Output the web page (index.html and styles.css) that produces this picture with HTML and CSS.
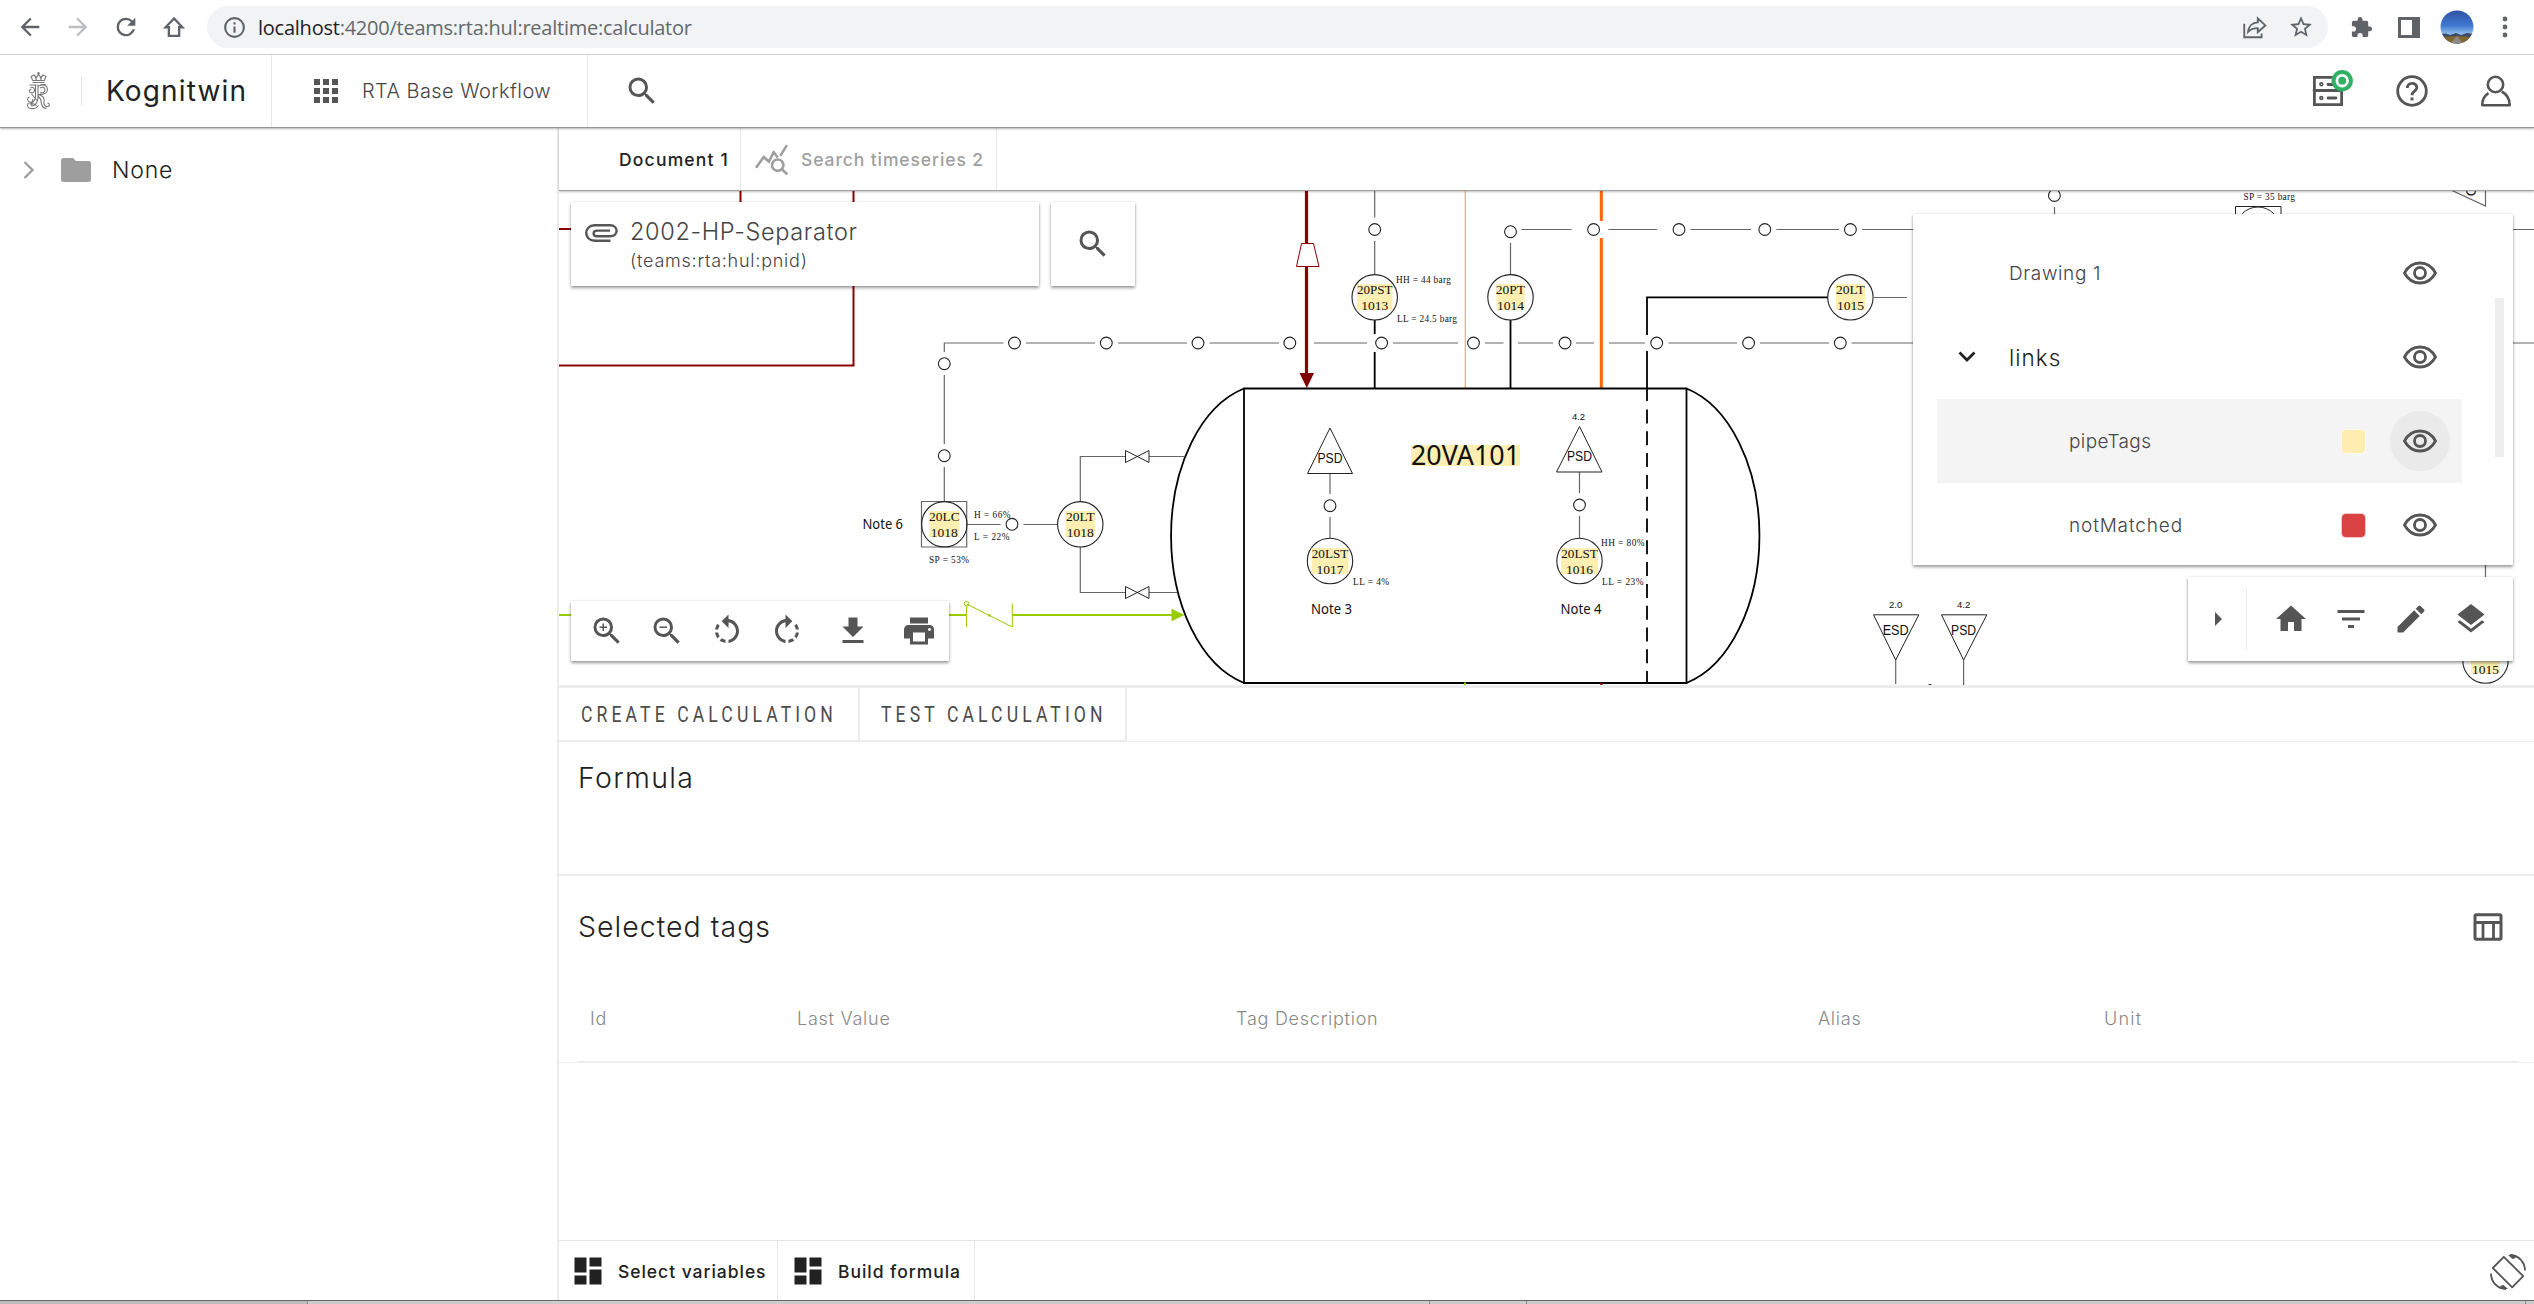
FILE: index.html
```html
<!DOCTYPE html>
<html lang="en">
<head>
<meta charset="utf-8">
<title>Kognitwin</title>
<link rel="stylesheet" href="styles.css">
</head>
<body>
<svg class="defs" width="0" height="0">
  <defs>
    <symbol id="eye" viewBox="0 0 36 36"><path d="M2.500 18C6 11.500 11.500 8 18 8s12 3.500 15.500 10C30 24.500 24.500 28 18 28S6 24.500 2.500 18z" fill="none" stroke="#555" stroke-width="2.800"/><circle cx="18" cy="18" r="5.500" fill="none" stroke="#555" stroke-width="2.800"/></symbol>
    <symbol id="search" viewBox="0 0 24 24"><path d="M15.500 14h-.79l-.28-.27A6.471 6.471 0 0 0 16 9.500 6.500 6.500 0 1 0 9.500 16c1.610 0 3.090-.59 4.230-1.570l.27.28v.79l5 4.990L20.490 19l-4.990-5zm-6 0C7.010 14 5 11.990 5 9.500S7.010 5 9.500 5 14 7.010 14 9.500 11.990 14 9.500 14z"/></symbol>
    <symbol id="dash" viewBox="0 0 24 24"><path d="M3 13h8V3H3v10zm0 8h8v-6H3v6zm10 0h8V11h-8v10zm0-18v6h8V3h-8z"/></symbol>
  </defs>
</svg>

<div class="browser-bar">
  <svg class="nav-icon" viewBox="0 0 24 24"><path d="M20 11H7.830l5.590-5.590L12 4l-8 8 8 8 1.410-1.410L7.830 13H20v-2z"/></svg>
  <svg class="nav-icon disabled" viewBox="0 0 24 24"><path d="M12 4l-1.410 1.410L16.170 11H4v2h12.170l-5.580 5.590L12 20l8-8z"/></svg>
  <svg class="nav-icon" viewBox="0 0 24 24"><path d="M17.650 6.350A7.958 7.958 0 0 0 12 4a8 8 0 1 0 7.730 10h-2.080A6 6 0 1 1 12 6c1.660 0 3.140.69 4.220 1.780L13 11h7V4l-2.350 2.350z"/></svg>
  <svg class="nav-icon" viewBox="0 0 24 24"><path d="M12 4.700L4.800 12.200H7.600V19.600H16.400V12.200H19.200z" fill="none" stroke="#5f6368" stroke-width="2"/></svg>
  <div class="omnibox">
    <svg class="info" viewBox="0 0 24 24"><path d="M11 7h2v2h-2zm0 4h2v6h-2zm1-9a10 10 0 1 0 0 20 10 10 0 0 0 0-20zm0 18a8 8 0 1 1 0-16 8 8 0 0 1 0 16z"/></svg>
    <span class="url"><b>localhost</b>:4200/teams:rta:hul:realtime:calculator</span>
    <svg class="share" viewBox="0 0 24 24"><path d="M3 9v12.500h16V18M6.500 16.500c.5-5 4-8.500 9-8.700V4l7 6.500-7 6.300V13c-4 0-6.500.8-9 3.500z" fill="none" stroke="#5f6368" stroke-width="1.700"/></svg>
    <svg class="star" viewBox="0 0 24 24"><path d="M22 9.240l-7.190-.62L12 2 9.190 8.630 2 9.240l5.460 4.730L5.820 21 12 17.270 18.180 21l-1.630-7.030L22 9.240zM12 15.400l-3.760 2.270 1-4.280-3.320-2.880 4.380-.38L12 6.100l1.710 4.040 4.380.38-3.320 2.880 1 4.280L12 15.400z"/></svg>
  </div>
  <svg class="ext" viewBox="0 0 24 24"><path d="M20.500 11H19V7a2 2 0 0 0-2-2h-4V3.500a2.500 2.500 0 0 0-5 0V5H4a2 2 0 0 0-2 2v3.800h1.500a2.700 2.700 0 0 1 0 5.400H2V20a2 2 0 0 0 2 2h3.800v-1.500a2.700 2.700 0 0 1 5.400 0V22H17a2 2 0 0 0 2-2v-4h1.500a2.500 2.500 0 0 0 0-5z"/></svg>
  <svg class="side" viewBox="0 0 22 21"><path d="M0 0h22v21H0zM3 3v15h11V3z" fill-rule="evenodd"/></svg>
  <svg class="avatar" viewBox="0 0 34 34">
    <defs><linearGradient id="sky" x1="0" y1="0" x2="0" y2="1"><stop offset="0" stop-color="#2f519f"/><stop offset=".45" stop-color="#3f78d0"/><stop offset=".7" stop-color="#8dbbe9"/></linearGradient><clipPath id="round"><circle cx="17" cy="17" r="16.500"/></clipPath></defs>
    <g clip-path="url(#round)"><path d="M0 0h34v34H0z" fill="url(#sky)"/><path d="M0 24l6-.5 4 1.500 6-2 5 2 6-2 7 1v10H0z" fill="#3d4a66"/><path d="M0 27l17-1 17 1v8H0z" fill="#80662f"/><path d="M17 26l-7 8h13z" fill="#8c8a86"/></g>
  </svg>
  <svg class="dots" viewBox="0 0 6 22"><circle cx="3" cy="3" r="2.400"/><circle cx="3" cy="11" r="2.400"/><circle cx="3" cy="19" r="2.400"/></svg>
</div>

<header class="app-header">
  <div class="brand">
    <svg class="crest" viewBox="0 0 24 38" fill="none" stroke="#777" stroke-width="1.100">
      <path d="M6 10.500h12M6.500 9l-2-4.500 3-1.500 2.500 2.500L12 2l2 3.500L16.500 3l3 1.500-2 4.500M12 0v3M10.500 1.200h3M9 5l1 4M15 5l-1 4M6 8.500h12"/>
      <path d="M3 13h7M14 12.500h5M9 12.500v12c0 4-3 7-6 7M11.500 12.500v13c0 5-3 8.500-7 8.500M4 15.500c3-1 4 1 4 3s-2 3-4 2-1-4 1-3M12 14c6-2.500 9 0 9 3.500s-4 5.500-9 5M13.500 16c3-1.500 5-.5 5 2s-2.500 3-5 2.800M13 23c4 1 5 4 4.500 7s1.500 5 4 4.500 1-4-.5-3M11 24c4 2 3.500 6 4 8s2 4.500 5 4.500M3 25c-3 1-2 4 0 5s4-1 3-3M2 31c-2 2-1 5 2 5.500s6 0 8-3M5 22l6 7M4 33c2-2 5-1 6 1"/>
    </svg>
    <i class="brand-rule"></i>
    <span class="brand-name">Kognitwin</span>
  </div>
  <div class="workflow">
    <svg class="grid-icon" viewBox="0 0 24 24"><path d="M0 0h6v6H0zM9 0h6v6H9zM18 0h6v6h-6zM0 9h6v6H0zM9 9h6v6H9zM18 9h6v6h-6zM0 18h6v6H0zM9 18h6v6H9zM18 18h6v6h-6z"/></svg>
    <span class="wf-name">RTA Base Workflow</span>
  </div>
  <svg class="header-search"><use href="#search"/></svg>
  <div class="header-tools">
    <svg class="server" viewBox="0 0 42 38" fill="none" stroke="#555" stroke-width="2.800" stroke-linecap="round"><path d="M2.400 8.400h27.200v27.200H2.400zM2 21.500h27M16 15.500h6M16 29h8"/><circle cx="9.300" cy="15.300" r=".8"/><circle cx="9.300" cy="29" r=".8"/><circle cx="30.200" cy="11.700" r="10.700" fill="#2fb064" stroke="none"/><circle cx="30.200" cy="11.700" r="5.300" stroke="#fff"/></svg>
    <svg class="help" viewBox="0 0 32 32" fill="none" stroke="#555" stroke-width="2.800"><circle cx="16" cy="16" r="14.300"/><path d="M11.300 13c0-6 9.500-6 9.500-.4 0 3.600-4.800 3.500-4.800 7.700"/><path d="M16 22.500v2.900" stroke-width="3"/></svg>
    <svg class="person" viewBox="0 0 32 32" fill="none" stroke="#555" stroke-width="2.600" stroke-linejoin="round"><circle cx="15.500" cy="9.500" r="7.700"/><path d="M8.500 18.200C4.500 20.500 2.300 25 2.300 30.200h27.400c0-6-3-11-8-13.700"/></svg>
  </div>
</header>

<div class="workspace">
  <aside class="tree">
    <div class="tree-row">
      <svg class="chev" viewBox="0 0 12 18"><path d="M1.500 1l8 8-8 8" fill="none" stroke="#9e9e9e" stroke-width="2.300"/></svg>
      <svg class="folder" viewBox="0 0 30 24"><path d="M2.500 0h9.500l3 3h12.500A2.500 2.500 0 0 1 30 5.500v16a2.500 2.500 0 0 1-2.500 2.500h-25A2.500 2.500 0 0 1 0 21.500v-19A2.500 2.500 0 0 1 2.500 0z"/></svg>
      <span class="tree-label">None</span>
    </div>
  </aside>

  <main class="content">
    <nav class="doc-tabs">
      <div class="doc-tab first"><span class="t-doc">Document 1</span></div>
      <div class="doc-tab second">
        <svg class="series" viewBox="0 0 32 30" fill="none" stroke="#9e9e9e" stroke-width="2.500"><path d="M1 23l7.500-10.500 5 4.500 5-10M17.500 7l4.500 6M31 1l-6.500 10.500"/><circle cx="22" cy="20.500" r="5.500"/><path d="M26 24.500l5.500 5"/></svg>
        <span class="t-search">Search timeseries 2</span>
      </div>
    </nav>

    <section class="viewer">
      <svg class="diagram" viewBox="559 191 1975 494">
        <g fill="none" stroke="#8b0000" stroke-width="2">
          <path d="M740.500 191V229M559 229H740M853.500 191V365.500H559"/>
          <path d="M1306.500 191V244M1306.500 266V375" stroke-width="3.200"/>
          <path d="M1301.500 243.500h12l5.500 23h-22.500z" stroke-width="1"/>
        </g>
        <path d="M1299.500 373h14.500l-7.200 15z" fill="#800000"/>
        <path d="M1465.300 191V388" stroke="#ffb27a" stroke-width="1.400"/>
        <path d="M1601.300 191V221M1601.300 238V388" stroke="#ff6600" stroke-width="3"/>
        <g fill="none" stroke="#666" stroke-width="1.200">
          <path d="M1374.700 191V217.500M1374.700 241V274M1510.500 243V274"/>
          <path d="M1521.500 229.500H1571.500M1608.500 229.500H1657M1690.500 229.500H1751M1776.500 229.500H1839M1862 229.500H2534"/>
          <path d="M944.300 352V343H1003.500M1026 343H1095M1118 343H1187M1209.500 343H1279M1314 343H1367M1393 343H1458M1485 343H1503.500M1518 343H1553M1576 343H1594M1609 343H1645M1668.500 343H1737M1760 343H1829M1851.500 343H2534"/>
          <path d="M944.300 375V444M944.300 467V501M921.500 501.500h45.200v45.500h-45.200zM967 524.500H1000.500M1023.500 524.500H1057.500"/>
          <path d="M1080.300 501.500V456.500H1125.500M1149 456.500H1184M1080.300 547V592.500H1125.500M1149 592.500H1177"/>
          <path d="M1125.500 450.500V462.500L1149 450.500V462.500zM1125.500 586.500V598.500L1149 586.500V598.500z" stroke="#222" stroke-width="1"/>
          <path d="M1330 473.500V494M1330 517V538M1579.500 472V493M1579.500 516V538M1874 297.500H1907M2054.500 207V214M2485.500 565V577M1895.700 660V684M1963.600 660V685M2485.500 191V206L2451 190"/>
        </g>
        <g fill="none" stroke="#222" stroke-width="1">
          <path d="M1330 428L1352.500 473.500H1307.500zM1579.500 426.500L1602 472H1556.500zM1873.500 614.800H1918.800L1895.700 660zM1941.500 614.800H1986.800L1963.600 660z"/>
          <path d="M2235.500 230V206.500H2281V230"/><circle cx="2258" cy="229" r="22"/>
          <circle cx="1930" cy="687" r="2.500"/>
        </g>
        <g fill="#fff" stroke="#222" stroke-width="1.100">
          <circle cx="1374.700" cy="229.500" r="5.900"/><circle cx="1510.500" cy="231.700" r="5.900"/><circle cx="1593.600" cy="229.500" r="5.900"/><circle cx="1679" cy="229.500" r="5.900"/><circle cx="1764.800" cy="229.500" r="5.900"/><circle cx="1850.400" cy="229.500" r="5.900"/><circle cx="2054.400" cy="195.500" r="5.900"/>
          <circle cx="1014.500" cy="343" r="5.900"/><circle cx="1106.300" cy="343" r="5.900"/><circle cx="1198" cy="343" r="5.900"/><circle cx="1289.800" cy="343" r="5.900"/><circle cx="1473.500" cy="343" r="5.900"/><circle cx="1565" cy="343" r="5.900"/><circle cx="1748.600" cy="343" r="5.900"/><circle cx="1840.300" cy="343" r="5.900"/>
          <circle cx="944.300" cy="363.700" r="5.900"/><circle cx="944.300" cy="455.700" r="5.900"/><circle cx="1012" cy="524.300" r="5.900"/><circle cx="1330" cy="505.700" r="5.900"/><circle cx="1579.500" cy="505" r="5.900"/>
        </g>
        <g fill="none" stroke="#000" stroke-width="1.800">
          <path d="M1374.700 320V334M1374.700 352V388M1510.500 320V388M1647 335V297.300H1828M1647 351V388"/>
          <path d="M1244 388.500H1686.500V683H1244zM1244 388.500A97 152 0 0 0 1244 683M1686.500 388.500A97 152 0 0 1 1686.500 683"/>
          <path d="M1647 388.500V401M1647 409.500V683" stroke-dasharray="14 7.800"/>
        </g>
        <g fill="#fff" stroke="#222" stroke-width="1.100"><circle cx="1381.600" cy="343" r="5.900"/><circle cx="1656.700" cy="343" r="5.900"/></g>
        <g fill="none" stroke="#99cc00" stroke-width="2.200">
          <path d="M559 615H966.500M1012 615H1172"/>
          <path d="M966.500 606V627M966.500 604L1012.300 627V603.500" stroke-width="1"/><circle cx="966.500" cy="603.700" r="2.300" stroke-width="1"/><path d="M1465 682.500V685"/><path d="M1601.300 682.500V685" stroke="#800000"/>
        </g>
        <circle cx="989.300" cy="615.300" r="1.300" fill="#99cc00"/>
        <path d="M1171.500 608.700L1184.500 615 1171.500 621.300z" fill="#99cc00"/>

        <g fill="none" stroke="#222" stroke-width="1.100"><circle cx="1374.700" cy="297.300" r="22.700"/><circle cx="1510.500" cy="297.300" r="22.700"/><circle cx="1850.400" cy="297.300" r="22.700"/><circle cx="944.300" cy="524.300" r="22.700"/><circle cx="1080.300" cy="524.300" r="22.700"/><circle cx="1330" cy="561" r="22.700"/><circle cx="1579.500" cy="561" r="22.700"/><circle cx="2485.500" cy="660.600" r="22.700"/></g>
        <g fill="#fdeeb2">
          <rect x="1357" y="284" width="35.500" height="26"/><rect x="1496.500" y="284" width="28" height="26"/><rect x="1836" y="284" width="29" height="26"/><rect x="929.500" y="511" width="29.500" height="26"/><rect x="1065.500" y="511" width="29.500" height="26"/><rect x="1311.500" y="548" width="37" height="26"/><rect x="1561" y="548" width="37" height="26"/><rect x="2471" y="647.500" width="29" height="26"/><rect x="1411" y="445" width="109" height="21"/>
        </g>
        <g class="tag">
          <text x="1374.700" y="294" textLength="35.500" lengthAdjust="spacingAndGlyphs">20PST</text><text x="1374.700" y="310">1013</text>
          <text x="1510.500" y="294">20PT</text><text x="1510.500" y="310">1014</text>
          <text x="1850.400" y="294">20LT</text><text x="1850.400" y="310">1015</text>
          <text x="944.300" y="521">20LC</text><text x="944.300" y="537">1018</text>
          <text x="1080.300" y="521">20LT</text><text x="1080.300" y="537">1018</text>
          <text x="1330" y="558" textLength="36.500" lengthAdjust="spacingAndGlyphs">20LST</text><text x="1330" y="574">1017</text>
          <text x="1579.500" y="558" textLength="36.500" lengthAdjust="spacingAndGlyphs">20LST</text><text x="1579.500" y="574">1016</text>
          <text x="2485.500" y="673.500">1015</text>
        </g>
        <g class="limit">
          <text x="1396" y="282.500" textLength="55">HH = 44 barg</text><text x="1397" y="321.500" textLength="60">LL = 24.5 barg</text>
          <text x="974" y="517.700" textLength="36.500">H = 66%</text><text x="974" y="540" textLength="35.500">L = 22%</text><text x="929" y="563" textLength="40">SP = 53%</text>
          <text x="1353" y="585" textLength="36">LL = 4%</text><text x="1601" y="545.500" textLength="43.500">HH = 80%</text><text x="1602" y="585" textLength="41.500">LL = 23%</text>
          <text x="2243.500" y="200" textLength="51.500">SP = 35 barg</text>
        </g>
        <g class="trip">
          <text x="1330" y="462.500" textLength="25" lengthAdjust="spacingAndGlyphs">PSD</text><text x="1579.500" y="461" textLength="25" lengthAdjust="spacingAndGlyphs">PSD</text>
          <text x="1895.700" y="634.500" textLength="26" lengthAdjust="spacingAndGlyphs">ESD</text><text x="1963.600" y="634.500" textLength="25" lengthAdjust="spacingAndGlyphs">PSD</text>
          <text transform="translate(2465 191) rotate(90)" x="0" y="-1">D</text>
        </g>
        <g class="level"><text x="1578.500" y="419.500">4.2</text><text x="1895.700" y="608">2.0</text><text x="1963.600" y="608">4.2</text></g>
        <g class="note"><text x="862.500" y="529" textLength="40.500" lengthAdjust="spacingAndGlyphs">Note 6</text><text x="1311" y="614" textLength="41" lengthAdjust="spacingAndGlyphs">Note 3</text><text x="1560.500" y="613.500" textLength="41" lengthAdjust="spacingAndGlyphs">Note 4</text></g>
        <text class="vessel" x="1411" y="465" textLength="109" lengthAdjust="spacingAndGlyphs">20VA101</text>
      </svg>

      <div class="card file-card">
        <svg class="clip" viewBox="0 0 33 18" fill="none" stroke="#555" stroke-width="2.400"><path d="M25.500 16.700H9.500C-1.500 16.700-1.500 1.300 9.500 1.300H25c8.800 0 8.800 11 0 11H12c-4.500 0-4.500-5.700 0-5.700H25"/></svg>
        <div class="file-text"><span class="file-name">2002-HP-Separator</span><span class="file-ns">(teams:rta:hul:pnid)</span></div>
      </div>
      <div class="card search-card"><svg class="search-ic"><use href="#search"/></svg></div>

      <div class="card zoom-bar">
        <svg viewBox="0 0 24 24"><path d="M15.500 14h-.79l-.28-.27A6.471 6.471 0 0 0 16 9.500 6.500 6.500 0 1 0 9.500 16c1.610 0 3.090-.59 4.230-1.570l.27.28v.79l5 4.990L20.490 19l-4.990-5zm-6 0C7.010 14 5 11.990 5 9.500S7.010 5 9.500 5 14 7.010 14 9.500 11.990 14 9.500 14zm2.500-4h-2v2H9v-2H7V9h2V7h1v2h2v1z"/></svg>
        <svg viewBox="0 0 24 24"><path d="M15.500 14h-.79l-.28-.27A6.471 6.471 0 0 0 16 9.500 6.500 6.500 0 1 0 9.500 16c1.610 0 3.090-.59 4.230-1.570l.27.28v.79l5 4.990L20.490 19l-4.990-5zm-6 0C7.010 14 5 11.990 5 9.500S7.010 5 9.500 5 14 7.010 14 9.500 11.990 14 9.500 14zM7 9h5v1H7z"/></svg>
        <svg viewBox="0 0 24 24"><path d="M7.110 8.530L5.700 7.110C4.800 8.270 4.240 9.610 4.070 11h2.020c.14-.87.490-1.720 1.020-2.470zM6.090 13H4.070c.17 1.390.72 2.730 1.620 3.890l1.410-1.420c-.52-.75-.87-1.590-1.010-2.470zm1.010 5.320c1.160.9 2.510 1.440 3.900 1.610V17.900c-.87-.15-1.710-.49-2.460-1.030L7.100 18.320zM13 4.070V1L8.450 5.550 13 10V6.090c2.840.48 5 2.940 5 5.910s-2.160 5.430-5 5.910v2.020c3.950-.49 7-3.850 7-7.930s-3.050-7.440-7-7.930z"/></svg>
        <svg viewBox="0 0 24 24"><path d="M15.550 5.550L11 1v3.070C7.060 4.560 4 7.920 4 12s3.050 7.440 7 7.930v-2.020c-2.840-.48-5-2.940-5-5.910s2.160-5.430 5-5.910V10l4.550-4.450zM19.930 11c-.17-1.390-.72-2.730-1.620-3.890l-1.420 1.420c.54.750.88 1.600 1.020 2.470h2.020zM13 17.900v2.020c1.390-.17 2.740-.71 3.900-1.610l-1.440-1.440c-.75.54-1.590.89-2.460 1.030zm3.890-2.420l1.420 1.410c.9-1.160 1.450-2.500 1.620-3.890h-2.020c-.14.870-.48 1.720-1.020 2.480z"/></svg>
        <svg viewBox="0 0 24 24"><path d="M19 9h-4V3H9v6H5l7 7 7-7zM5 18v2h14v-2H5z"/></svg>
        <svg viewBox="0 0 24 24"><path d="M19 8H5c-1.660 0-3 1.340-3 3v6h4v4h12v-4h4v-6c0-1.660-1.340-3-3-3zm-3 11H8v-6h8v6zm3-7c-.55 0-1-.45-1-1s.45-1 1-1 1 .45 1 1-.45 1-1 1zm-1-9H6v4h12V3z"/></svg>
      </div>

      <div class="card layers">
        <div class="layer"><span class="l-draw">Drawing 1</span><svg class="eye"><use href="#eye"/></svg></div>
        <div class="layer"><svg class="caret" viewBox="0 0 18 12"><path d="M1.500 1.500L9 9l7.500-7.500" fill="none" stroke="#222" stroke-width="2.800"/></svg><span class="l-links">links</span><svg class="eye"><use href="#eye"/></svg></div>
        <div class="layer child active"><span class="l-pipe">pipeTags</span><i class="swatch yellow"></i><span class="halo"><svg class="eye"><use href="#eye"/></svg></span></div>
        <div class="layer child"><span class="l-not">notMatched</span><i class="swatch red"></i><svg class="eye"><use href="#eye"/></svg></div>
        <i class="thumb"></i>
      </div>

      <div class="card draw-bar">
        <svg class="play" viewBox="0 0 7 14"><path d="M0 0l7 7-7 7z"/></svg>
        <i class="bar-rule"></i>
        <svg viewBox="0 0 24 24"><path d="M10 20v-6h4v6h5v-8h3L12 3 2 12h3v8z"/></svg>
        <svg viewBox="0 0 24 24"><path d="M10 18h4v-2h-4v2zM3 6v2h18V6H3zm3 7h12v-2H6v2z"/></svg>
        <svg viewBox="0 0 24 24"><path d="M3 17.250V21h3.750L17.810 9.940l-3.750-3.750L3 17.250zM20.710 7.040a1 1 0 0 0 0-1.410l-2.340-2.340a1 1 0 0 0-1.410 0l-1.830 1.830 3.750 3.750 1.830-1.830z"/></svg>
        <svg viewBox="0 0 24 24"><path d="M11.990 18.540l-7.370-5.730L3 14.070l9 7 9-7-1.630-1.270-7.380 5.740zM12 16l7.360-5.730L21 9l-9-7-9 7 1.630 1.270L12 16z"/></svg>
      </div>
    </section>

    <nav class="calc-tabs">
      <div class="calc-tab create"><span>CREATE CALCULATION</span></div>
      <div class="calc-tab test"><span>TEST CALCULATION</span></div>
    </nav>
    <section class="formula"><h2 class="h-formula">Formula</h2></section>
    <section class="tags">
      <div class="tags-head"><h2 class="h-tags">Selected tags</h2>
        <svg class="table-ic" viewBox="0 0 30 28" fill="none" stroke="#555" stroke-width="3"><rect x="2" y="1.700" width="26" height="24.600" rx="1.500"/><path d="M2 9.500h26M10 9.500v16M20.500 9.500v16" stroke-width="2.800"/></svg>
      </div>
      <div class="columns"><span class="c-id">Id</span><span class="c-val">Last Value</span><span class="c-desc">Tag Description</span><span class="c-alias">Alias</span><span class="c-unit">Unit</span></div>
    </section>
    <section class="rows"></section>
    <footer class="bottom">
      <div class="btab b1"><svg><use href="#dash"/></svg><span class="b-sel">Select variables</span></div>
      <div class="btab b2"><svg><use href="#dash"/></svg><span class="b-build">Build formula</span></div>
      <svg class="rotate" viewBox="0 0 36 36" fill="none" stroke="#555" stroke-width="1.800"><path d="M13.800 2.800L33.200 22.200 22.200 33.400 2.800 14z" stroke-linejoin="round"/><path d="M20 1c8.500 0 15 7 15 15.500M16 35C7.500 35 1 28 1 19.500"/><path d="M18 1l6 0 2 3-3.500 1zM18 35l-6 0-2-3 3.500-1z" fill="#555" stroke="none"/></svg>
    </footer>
  </main>
</div>
<div class="taskbar-edge"><i class="seg-a"></i><i class="seg-b"></i><i class="seg-c"></i><i class="seg-d"></i></div>
</body>
</html>
```
FILE: styles.css
```css
* { box-sizing: border-box; }
body { margin: 0; width: 2534px; height: 1304px; overflow: hidden; display: flex; flex-direction: column; background: #fff; color: #212121; font-family: Inter, Roboto, sans-serif; font-weight: 300; }
svg { display: block; flex: none; }
svg:not([fill]) { fill: #555; }
.defs { position: absolute; }
h2 { margin: 0; font-size: 28.500px; font-weight: 350; line-height: 34px; }
span { white-space: nowrap; }

.browser-bar { height: 55px; flex: none; border-bottom: 1px solid #d5d6d8; display: flex; align-items: center; padding: 0 0 0 16px; }
.browser-bar svg { fill: #5f6368; }
.nav-icon { width: 28px; height: 28px; margin-right: 20px; }
.browser-bar .disabled { fill: #bbbdc0; }
.omnibox { width: 2121px; height: 42px; margin-left: -1px; border-radius: 21px; background: #f1f3f4; display: flex; align-items: center; }
.info { width: 25px; height: 25px; margin-left: 15px; }
.url { margin-left: 11px; font: 20px "Open Sans", sans-serif; letter-spacing: -.24px; color: #65686c; }
.url b { font-weight: 400; color: #202124; }
.share { width: 26px; height: 26px; margin-left: auto; }
.star { width: 26px; height: 26px; margin: 0 14px 0 21px; }
.ext { width: 23px; height: 23px; margin-left: 22px; }
.side { width: 22px; height: 21px; margin-left: 25px; }
.avatar { width: 34px; height: 34px; margin-left: 20px; }
.dots { width: 6px; height: 22px; margin-left: 28px; }

.app-header { height: 73px; flex: none; border-bottom: 1px solid #979797; box-shadow: 0 1px 2px rgba(0,0,0,.3); display: flex; align-items: center; position: relative; z-index: 2; background: #fff; }
.brand { width: 272px; height: 72px; border-right: 1px solid #e8e8e8; display: flex; align-items: center; padding-left: 26px; }
.crest { width: 25px; height: 38px; }
.brand-rule { width: 1px; height: 30px; background: #e4e4e4; margin-left: 30px; }
.brand-name { margin-left: 24px; font-size: 28px; font-weight: 370; letter-spacing: 1.150px; }
.workflow { width: 316px; height: 72px; border-right: 1px solid #e8e8e8; display: flex; align-items: center; padding-left: 42px; }
.grid-icon { width: 24px; height: 24px; }
.wf-name { margin-left: 24px; font-size: 20px; color: #444; letter-spacing: .43px; }
.header-search { width: 36px; height: 36px; margin-left: 36px; }
.header-tools { margin-left: auto; display: flex; align-items: center; padding-right: 22px; }
.server { width: 42px; height: 38px; margin-top: -7px; }
.help { width: 32px; height: 32px; margin-left: 42px; }
.person { width: 32px; height: 32px; margin-left: 52px; }

.workspace { flex: 1; min-height: 0; display: flex; }
.tree { width: 557px; flex: none; padding: 23px 0 0 23px; }
.tree-row { height: 38px; display: flex; align-items: center; }
.chev { width: 12px; height: 18px; }
.folder { width: 30px; height: 24px; margin-left: 26px; }
svg.folder { fill: #9e9e9e; }
.tree-label { margin-left: 21px; padding-bottom: 1px; font-size: 23px; font-weight: 350; letter-spacing: .8px; }

.content { flex: 1; min-width: 0; border-left: 2px solid #ececec; display: flex; flex-direction: column; }
.doc-tabs { height: 63px; flex: none; border-bottom: 1px solid #a2a2a2; box-shadow: 0 1px 2px rgba(0,0,0,.25); display: flex; position: relative; z-index: 1; font-size: 17.500px; font-weight: 500; background: #fff; }
.doc-tab { display: flex; align-items: center; border-right: 1px solid #e8e8e8; padding-top: 1px; }
.first { width: 182px; padding-left: 60px; }
.second { width: 256px; padding-left: 14px; color: #a0a0a0; }
.t-doc { letter-spacing: 1.200px; }
.t-search { letter-spacing: .9px; }
.series { width: 33px; height: 31px; margin-right: 13px; }

.viewer { height: 494px; flex: none; position: relative; }
.diagram { width: 1975px; height: 494px; }
.diagram text { fill: #111; }
.tag { font: 13.500px "Liberation Serif", serif; text-anchor: middle; }
.limit { font: 9.300px "Liberation Serif", serif; }
.trip { font: 14.500px "Liberation Sans", sans-serif; text-anchor: middle; }
.level { font: 9.500px "Liberation Sans", sans-serif; text-anchor: middle; }
.note { font: 13.500px "Noto Sans", sans-serif; }
.vessel { font: 27px "Noto Sans", sans-serif; }

.card { position: absolute; background: #fff; display: flex; align-items: center; box-shadow: 0 2px 3px rgba(0,0,0,.38), 0 0 2px rgba(0,0,0,.12); color: #444; }
.file-card { left: 12px; top: 11px; width: 468px; height: 84px; padding-left: 14px; }
.clip { width: 33px; height: 18px; margin: -22px 12px 0 0; }
.file-text { display: flex; flex-direction: column; padding-top: 4px; }
.file-name { font-size: 23.500px; line-height: 30px; letter-spacing: .65px; }
.file-ns { font-size: 18px; line-height: 28px; letter-spacing: .76px; }
.search-card { left: 492px; top: 11px; width: 84px; height: 84px; justify-content: center; }
.search-ic { width: 36px; height: 36px; }
.zoom-bar { left: 12px; top: 410px; width: 378px; height: 60px; padding-left: 17.500px; gap: 24.300px; }
.zoom-bar svg { width: 36px; height: 36px; }
.zoom-bar svg:nth-child(n+5) { margin-left: 5.500px; }
.layers { left: 1354px; top: 23px; width: 600px; height: 351px; padding: 17px 51px 0 24px; flex-direction: column; align-items: stretch; font-size: 19px; }
.layer { height: 84px; flex: none; display: flex; align-items: center; padding: 0 24px 0 72px; }
.layer .eye { margin-left: auto; }
.l-draw { letter-spacing: .65px; }
.l-pipe { letter-spacing: .4px; }
.l-not { letter-spacing: .85px; }
.eye { width: 36px; height: 36px; }
.caret { width: 18px; height: 12px; margin: 0 33px 0 -51px; }
.l-links { font-size: 22.500px; color: #212121; font-weight: 350; letter-spacing: 1px; }
.child { padding-left: 132px; }
.active { background: #f4f4f4; }
.swatch { width: 25px; height: 25px; border-radius: 5px; margin-left: auto; border: 1px solid rgba(255,255,255,.7); }
.yellow { background: #fdedb0; }
.red { background: #d94242; }
.layer .swatch + .eye { margin-left: 36px; }
.halo { width: 60px; height: 60px; border-radius: 50%; background: #eaeaea; display: flex; margin: 0 -12px 0 24px; align-items: center; justify-content: center; }
.layer .halo .eye { margin: 0; }
.thumb { position: absolute; right: 9px; top: 84px; width: 9px; height: 159px; background: #eee; }
.draw-bar { left: 1629px; top: 386px; width: 325px; height: 84px; padding-left: 27px; gap: 24px; }
.draw-bar svg { width: 36px; height: 36px; }
.draw-bar .play { width: 7px; height: 14px; }
.bar-rule { width: 1px; height: 60px; background: #e8e8e8; margin-right: 2px; }

.calc-tabs { height: 57px; flex: none; border-top: 3px solid #ececec; border-bottom: 1px solid #ececec; display: flex; }
.calc-tab { border-right: 2px solid #ececec; border-bottom: 1px solid #ececec; display: flex; align-items: center; font-family: Roboto, sans-serif; font-weight: 400; font-size: 22px; color: #4c4c4c; }
.calc-tab span { transform: scaleX(.8); transform-origin: left; letter-spacing: 5.120px; }
.create { width: 301px; padding-left: 22px; }
.test { width: 267px; padding-left: 21px; }
.formula { height: 134px; flex: none; border-bottom: 2px solid #ececec; padding: 19px; }
.h-formula { letter-spacing: 1.300px; }
.tags { height: 187px; flex: none; border-bottom: 1px solid #ececec; padding: 0 16px 0 19px; display: flex; flex-direction: column; }
.tags-head { height: 102px; display: flex; align-items: center; }
.h-tags { letter-spacing: 1.020px; }
.table-ic { width: 30px; height: 28px; margin: 0 15px 0 auto; }
.columns { flex: 1; border-bottom: 1px solid #ececec; display: grid; grid-template-columns: 207px 439px 582px 286px 1fr; align-items: center; padding: 0 0 2px 12px; font-size: 18px; letter-spacing: .75px; color: #888; }
.c-unit { letter-spacing: 1.200px; }
.rows { flex: 1; }
.bottom { height: 60px; flex: none; border-top: 1px solid #e4e4e4; display: flex; align-items: center; font-size: 17.500px; font-weight: 500; letter-spacing: .96px; }
.btab { height: 59px; display: flex; align-items: center; border-right: 1px solid #e6e6e6; }
.btab svg { width: 36px; height: 36px; fill: #212121; }
.b1 { width: 219px; padding-left: 11px; }
.b2 { width: 197px; padding-left: 12px; }
.btab span { margin-left: 12px; padding-top: 1px; }
.rotate { width: 36px; height: 36px; margin: 2px 8px 0 auto; }
.taskbar-edge { height: 4px; flex: none; border-top: 1px solid #666; background: #cdcbcb; display: flex; }
.taskbar-edge i { border-right: 1px solid #888; }
.seg-a { width: 308px; background: #bdbcbc; }
.seg-b { width: 1122px; }
.seg-c { width: 97px; }
.seg-d { width: 999px; }
```
